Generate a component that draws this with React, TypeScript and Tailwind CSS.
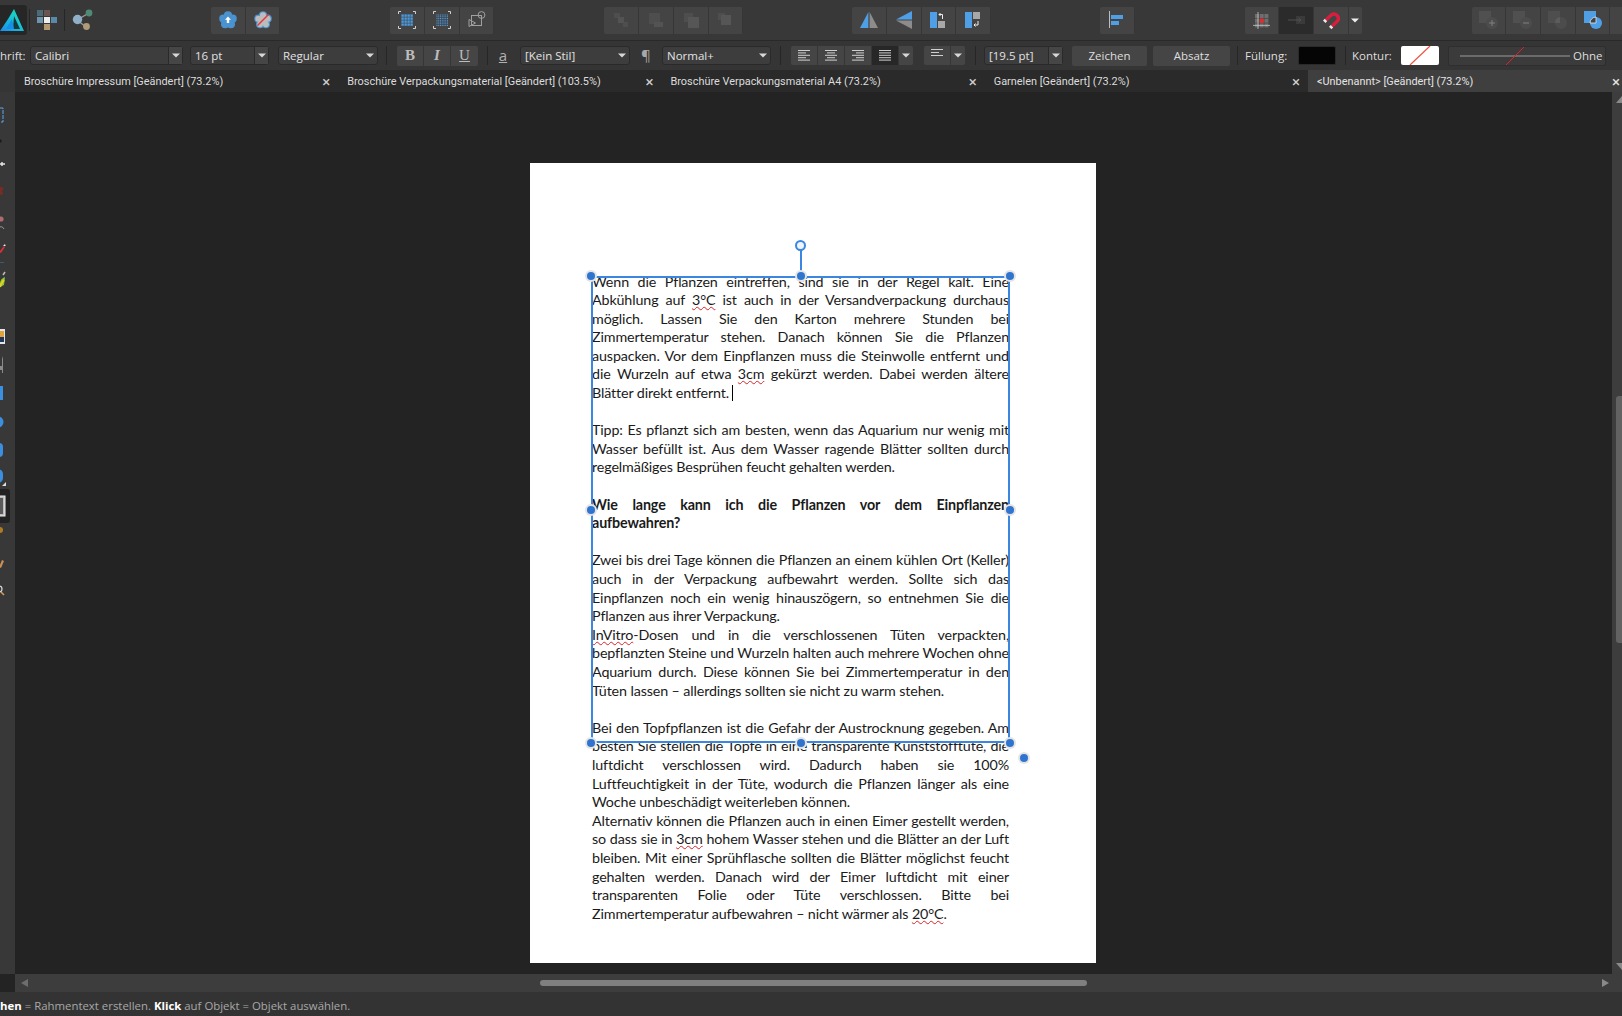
import type { ReactNode } from "react"

/* ----------------------------
   DOCUMENT TEXT
---------------------------- */
type Line = { t: string; last?: boolean; bold?: boolean; caret?: boolean }

const LINES: Line[] = [
    { t: "Wenn die Pflanzen eintreffen, sind sie in der Regel kalt. Eine" },
    { t: "Abkühlung auf 3°C ist auch in der Versandverpackung durchaus" },
    { t: "möglich. Lassen Sie den Karton mehrere Stunden bei" },
    { t: "Zimmertemperatur stehen. Danach können Sie die Pflanzen" },
    { t: "auspacken. Vor dem Einpflanzen muss die Steinwolle entfernt und" },
    { t: "die Wurzeln auf etwa 3cm gekürzt werden. Dabei werden ältere" },
    { t: "Blätter direkt entfernt.", last: true, caret: true },
    { t: "" },
    { t: "Tipp: Es pflanzt sich am besten, wenn das Aquarium nur wenig mit" },
    { t: "Wasser befüllt ist. Aus dem Wasser ragende Blätter sollten durch" },
    { t: "regelmäßiges Besprühen feucht gehalten werden.", last: true },
    { t: "" },
    { t: "Wie lange kann ich die Pflanzen vor dem Einpflanzen", bold: true },
    { t: "aufbewahren?", last: true, bold: true },
    { t: "" },
    { t: "Zwei bis drei Tage können die Pflanzen an einem kühlen Ort (Keller)" },
    { t: "auch in der Verpackung aufbewahrt werden. Sollte sich das" },
    { t: "Einpflanzen noch ein wenig hinauszögern, so entnehmen Sie die" },
    { t: "Pflanzen aus ihrer Verpackung.", last: true },
    { t: "InVitro-Dosen und in die verschlossenen Tüten verpackten," },
    { t: "bepflanzten Steine und Wurzeln halten auch mehrere Wochen ohne" },
    { t: "Aquarium durch. Diese können Sie bei Zimmertemperatur in den" },
    { t: "Tüten lassen – allerdings sollten sie nicht zu warm stehen.", last: true },
    { t: "" },
    { t: "Bei den Topfpflanzen ist die Gefahr der Austrocknung gegeben. Am" },
    { t: "besten Sie stellen die Töpfe in eine transparente Kunststofftüte, die" },
    { t: "luftdicht verschlossen wird. Dadurch haben sie 100%" },
    { t: "Luftfeuchtigkeit in der Tüte, wodurch die Pflanzen länger als eine" },
    { t: "Woche unbeschädigt weiterleben können.", last: true },
    { t: "Alternativ können die Pflanzen auch in einen Eimer gestellt werden," },
    { t: "so dass sie in 3cm hohem Wasser stehen und die Blätter an der Luft" },
    { t: "bleiben. Mit einer Sprühflasche sollten die Blätter möglichst feucht" },
    { t: "gehalten werden. Danach wird der Eimer luftdicht mit einer" },
    { t: "transparenten Folie oder Tüte verschlossen. Bitte bei" },
    { t: "Zimmertemperatur aufbewahren – nicht wärmer als 20°C.", last: true },
]

function Spelled({ text }: { text: string }) {
    return (
        <>
            {text.split(/(3°C|3cm|InVitro|20°C)/).map((part, i) =>
                i % 2 ? (
                    <span key={i} className="underline decoration-wavy decoration-[#d8232a] decoration-1 underline-offset-1">
                        {part}
                    </span>
                ) : (
                    part
                )
            )}
        </>
    )
}

/* ----------------------------
   TOOLBAR PARTS
---------------------------- */
function Group({ children, className = "" }: { children: ReactNode; className?: string }) {
    return <div className={`flex shrink-0 rounded-[2px] overflow-hidden ${className}`}>{children}</div>
}

function Btn({ children, dark }: { children?: ReactNode; dark?: boolean }) {
    return (
        <div className={`w-[34.7px] h-[27px] shrink-0 flex items-center justify-center border-r border-[#363636] ${dark ? "bg-[#2b2b2b]" : "bg-[#444444]"}`}>
            {children}
        </div>
    )
}

function Caret({ color = "#d8d8d8" }: { color?: string }) {
    return (
        <svg width="8" height="5" viewBox="0 0 8 5">
            <path d="M0 0.5h8L4 4.5z" fill={color} />
        </svg>
    )
}

function Combo({ label, w, split, ml }: { label: string; w: string; split?: boolean; ml: string }) {
    return (
        <div className={`${w} ${ml} h-[19px] shrink-0 flex items-center bg-[#3d3d3d] border border-[#2a2a2a] rounded-[3px] text-[#e2e2e2]`}>
            <span className="flex-1 pl-[4px] truncate">{label}</span>
            <span className={`w-[14px] h-full flex items-center justify-center ${split ? "border-l border-[#2a2a2a] bg-[#464646]" : ""}`}>
                <Caret />
            </span>
        </div>
    )
}

function Sep({ ml }: { ml: string }) {
    return <div className={`w-px h-[19px] shrink-0 bg-[#262626] ${ml}`} />
}

function Flower({ fill, children }: { fill: string; children: ReactNode }) {
    const lobes = [0, 72, 144, 216, 288].map((a) => {
        const r = ((a - 90) * Math.PI) / 180
        return [9 + 4.9 * Math.cos(r), 9.2 + 4.9 * Math.sin(r)]
    })
    return (
        <svg width="18" height="18" viewBox="0 0 18 18">
            {lobes.map(([x, y], i) => (
                <circle key={i} cx={x} cy={y} r="4.1" fill="#4a92d0" />
            ))}
            {lobes.map(([x, y], i) => (
                <circle key={i} cx={x} cy={y} r="3" fill={fill} />
            ))}
            <circle cx="9" cy="9.2" r="4.5" fill={fill} />
            {children}
        </svg>
    )
}

function Corners() {
    return (
        <path d="M.5 3V.5H3M15 .5h2.5V3M17.5 15v2.5H15M3 17.5H.5V15" fill="none" stroke="#d0d0d0" strokeWidth="1" />
    )
}

function DotGrid({ n, size, step, start, fill = "#4a9be0" }: { n: number; size: number; step: number; start: number; fill?: string }) {
    const cells = []
    for (let y = 0; y < n; y++) {
        for (let x = 0; x < n; x++) {
            cells.push(<rect key={`${x}-${y}`} x={start + x * step} y={start + y * step} width={size} height={size} fill={fill} />)
        }
    }
    return <>{cells}</>
}

function AlignLines({ kind }: { kind: "left" | "center" | "right" | "justify" }) {
    const rows = [
        [12, 8, 12, 8, 12],
        [12, 8, 12, 8, 12],
        [12, 8, 12, 8, 12],
        [12, 12, 12, 12, 12],
    ][["left", "center", "right", "justify"].indexOf(kind)]
    return (
        <svg width="12" height="11" viewBox="0 0 12 11">
            {rows.map((w, i) => (
                <rect
                    key={i}
                    x={kind === "left" || kind === "justify" ? 0 : kind === "center" ? (12 - w) / 2 : 12 - w}
                    y={i * 2.4}
                    width={w}
                    height="1"
                    fill="#cfcfcf"
                />
            ))}
        </svg>
    )
}

/* ----------------------------
   LEFT TOOL STRIP (clipped by the window edge)
---------------------------- */
const TOOLS: { h: number; icon?: ReactNode; active?: boolean }[] = [
    { h: 14 },
    { h: 26, icon: <rect x="-5" y="2" width="8" height="14" fill="none" stroke="#5aa7ec" strokeWidth="1" strokeDasharray="4 1" /> },
    { h: 24, icon: <circle cx="0" cy="9" r="1.8" fill="#1c1c1c" /> },
    { h: 25, icon: <path d="M0 8h5M2 6v4" stroke="#e8e8e8" strokeWidth="1.4" /> },
    { h: 30, icon: <path d="M-2 5l6 2-2 3 1 3-5 2z" fill="#7a2c24" /> },
    { h: 27, icon: <><circle cx="1" cy="8" r="2.6" fill="#b06a70" /><path d="M-2 17q4-3 6 1" stroke="#9a9a9a" fill="none" /></> },
    { h: 25, icon: <><path d="M-1 14l5-6 1 1-4 6z" fill="#d8303a" /><path d="M3 8l2-2 .6 2z" fill="#eee" /><path d="M-1 25h5" stroke="#3d78c0" /></> },
    { h: 40, icon: <><path d="M0 24q-1-8 5-10l-1 8z" fill="#86c83a" /><path d="M0 24q1-4 4-7" stroke="#e4d020" strokeWidth="2" fill="none" /><path d="M3 12l2-3" stroke="#bbb" strokeWidth="1.5" /></> },
    { h: 49, icon: <><rect x="-6" y="26" width="11" height="15" fill="#dfe6ee" /><rect x="-5" y="28" width="9" height="6" fill="#e0a43a" /><rect x="-5" y="34" width="9" height="5" fill="#22375c" /></> },
    { h: 28, icon: <path d="M-2 14h4V7l1-3v17h-1v-3h-4z" fill="#8a8a8a" /> },
    { h: 28, icon: <rect x="-8" y="6" width="11" height="14" fill="#3b8fe0" /> },
    { h: 28, icon: <circle cx="-2" cy="14" r="5.5" fill="#3b8fe0" /> },
    { h: 27, icon: <rect x="-8" y="7" width="11" height="14" rx="4" fill="#3b8fe0" /> },
    { h: 26, icon: <><rect x="-8" y="6" width="11" height="14" rx="5" fill="#3b8fe0" /><path d="M6 19v4h-4z" fill="#ddd" /></> },
    {
        h: 34,
        active: true,
        icon: <><rect x="-3" y="7" width="8" height="20" fill="#bdbdbd" stroke="#eee" /><path d="M-1 9h4v16h-4z" fill="#5a5a5a" /></>,
    },
    { h: 24, icon: <><circle cx="0" cy="7" r="3" fill="#b07a20" /></> },
    { h: 32, icon: <path d="M-1 20l3-7 2 1-3 7z" fill="#c89058" /> },
    { h: 28, icon: <><circle cx="-1" cy="10" r="3" fill="none" stroke="#ddd" strokeWidth="1.2" /><path d="M1 13l3 3" stroke="#d09a58" strokeWidth="1.6" /></> },
]

export default function App() {
    return (
        <div className="w-[1622px] h-[1016px] flex flex-col overflow-hidden bg-[#232323] font-['Open_Sans',sans-serif] text-[#dcdcdc]">
            {/* MAIN TOOLBAR */}
            <div className="h-[41px] shrink-0 flex items-center overflow-hidden bg-[#383838] border-b border-[#292929]">
                <div className="w-[27px] h-[30px] shrink-0 rounded-r-[3px] bg-[#262626] flex items-center">
                    <svg width="25" height="24" viewBox="0 0 25 24">
                        <defs>
                            <linearGradient id="logo" x1="0" y1="1" x2="1" y2="0">
                                <stop offset="0" stopColor="#1c8cf0" />
                                <stop offset="0.6" stopColor="#18c8d0" />
                                <stop offset="1" stopColor="#1fe0a0" />
                            </linearGradient>
                        </defs>
                        <path d="M14 1L24 23H0L8 11z" fill="url(#logo)" />
                        <path d="M14 8L20 21H13z" fill="#123a3a" />
                        <path d="M6 21l6-10 2 10z" fill="#1590e8" />
                    </svg>
                </div>
                <div className="w-px h-[22px] shrink-0 bg-[#262626] ml-[2px]" />
                <svg className="ml-[7px] shrink-0" width="20" height="20" viewBox="0 0 20 20">
                    <rect x="0" y="0" width="6" height="6" fill="#4d6a78" />
                    <rect x="7" y="0" width="6" height="6" fill="#6a5550" />
                    <rect x="0" y="7" width="6" height="6" fill="#6d95ad" />
                    <rect x="7" y="7" width="6" height="6" fill="#efefef" />
                    <rect x="14" y="7" width="6" height="6" fill="#5a88a8" />
                    <rect x="7" y="14" width="6" height="6" fill="#b39a70" />
                </svg>
                <div className="w-px h-[22px] shrink-0 bg-[#262626] ml-[7px]" />
                <svg className="ml-[7px] shrink-0" width="22" height="22" viewBox="0 0 22 22">
                    <path d="M5 11L17 4M5 11L14 18" stroke="#9a9a9a" strokeWidth="1.4" />
                    <circle cx="5.5" cy="10.5" r="4.7" fill="#8fb0c8" />
                    <circle cx="17" cy="4" r="3.4" fill="#4f8a78" />
                    <circle cx="14.5" cy="17.5" r="3.4" fill="#b09a78" />
                </svg>

                <Group className="ml-[117px]">
                    <Btn>
                        <Flower fill="#4a92d0">
                            <path d="M9 5.5l3 3.2h-1.8V12H7.8V8.7H6z" fill="#fff" />
                        </Flower>
                    </Btn>
                    <Btn>
                        <Flower fill="#bcbcbc">
                            <path d="M3.5 14.5L14.5 3.5" stroke="#e8343a" strokeWidth="1.4" />
                        </Flower>
                    </Btn>
                </Group>

                <Group className="ml-[110px]">
                    <Btn>
                        <svg width="18" height="18" viewBox="0 0 18 18">
                            <Corners />
                            <DotGrid n={4} size={2.4} step={3} start={3.4} />
                        </svg>
                    </Btn>
                    <Btn>
                        <svg width="18" height="18" viewBox="0 0 18 18">
                            <Corners />
                            <DotGrid n={7} size={1} step={1.75} start={3.5} />
                        </svg>
                    </Btn>
                    <Btn>
                        <svg width="18" height="18" viewBox="0 0 18 18" fill="none" stroke="#a0a0a0" strokeWidth="1">
                            <rect x="3.5" y="4.5" width="10" height="10" />
                            <circle cx="13.5" cy="4" r="3.4" />
                            <path d="M1 8.5l6.5 3.5-6.5 3.5z" />
                        </svg>
                    </Btn>
                </Group>

                <Group className="ml-[110px]">
                    <Btn>
                        <svg width="16" height="16" viewBox="0 0 16 16" fill="#4e4e4e">
                            <rect x="1" y="1" width="6" height="5" />
                            <rect x="5" y="5" width="6" height="6" fill="#535353" />
                            <rect x="10" y="10" width="5" height="5" />
                        </svg>
                    </Btn>
                    <Btn>
                        <svg width="16" height="16" viewBox="0 0 16 16" fill="#4e4e4e">
                            <rect x="1" y="1" width="11" height="11" />
                            <rect x="6" y="10" width="9" height="5" fill="#535353" />
                        </svg>
                    </Btn>
                    <Btn>
                        <svg width="16" height="16" viewBox="0 0 16 16" fill="#4e4e4e">
                            <rect x="1" y="1" width="9" height="9" />
                            <rect x="5" y="5" width="11" height="11" fill="#565656" />
                        </svg>
                    </Btn>
                    <Btn>
                        <svg width="16" height="16" viewBox="0 0 16 16" fill="#4e4e4e">
                            <rect x="1" y="1" width="7" height="7" />
                            <rect x="4" y="3" width="10" height="10" fill="#565656" />
                        </svg>
                    </Btn>
                </Group>

                <Group className="ml-[109px]">
                    <Btn>
                        <svg width="18" height="16" viewBox="0 0 18 16">
                            <path d="M8.4 0v16H0z" fill="#4f9fe6" />
                            <path d="M9.6 0v16H18z" fill="#8c8c8c" />
                        </svg>
                    </Btn>
                    <Btn>
                        <svg width="16" height="18" viewBox="0 0 16 18">
                            <path d="M16 0v8.4H0z" fill="#4f9fe6" />
                            <path d="M16 18V9.6H0z" fill="#8c8c8c" />
                        </svg>
                    </Btn>
                    <Btn>
                        <svg width="16" height="16" viewBox="0 0 16 16">
                            <rect x="0" y="0" width="7" height="16" fill="#4f9fe6" />
                            <rect x="8" y="9" width="7" height="7" fill="#a8a8a8" />
                            <path d="M12.5 7V2.5H9M10.5 1L9 2.5 10.5 4" fill="none" stroke="#eee" strokeWidth="1" />
                        </svg>
                    </Btn>
                    <Btn>
                        <svg width="16" height="16" viewBox="0 0 16 16">
                            <rect x="0" y="0" width="7" height="16" fill="#4f9fe6" />
                            <rect x="8" y="0" width="7" height="7" fill="#a8a8a8" />
                            <path d="M13 9v4H9M10.5 11.5L9 13l1.5 1.5" fill="none" stroke="#eee" strokeWidth="1" />
                        </svg>
                    </Btn>
                </Group>

                <Group className="ml-[109px]">
                    <Btn>
                        <svg width="15" height="18" viewBox="0 0 15 18">
                            <rect x="0" y="0" width="1" height="17" fill="#bdbdbd" />
                            <rect x="2" y="4" width="12" height="4" fill="#4f9fe6" />
                            <rect x="2" y="10" width="8" height="4" fill="#4f9fe6" />
                        </svg>
                    </Btn>
                </Group>

                <Group className="ml-[110px]">
                    <Btn>
                        <svg width="17" height="17" viewBox="0 0 17 17">
                            <DotGrid n={3} size={4} step={4.7} start={2} fill="#6e6e6e" />
                            <rect x="6.7" y="6.7" width="4" height="4" fill="#e8282e" />
                            <path d="M0 13.4h17M5 0v17" stroke="#c4c4c4" strokeWidth="0.8" fill="none" />
                        </svg>
                    </Btn>
                    <Btn dark>
                        <svg width="17" height="8" viewBox="0 0 17 8">
                            <rect x="8" y="0" width="9" height="8" fill="#3a3a3a" />
                            <path d="M0 4h13M10.5 2l2.5 2-2.5 2" stroke="#505050" fill="none" />
                        </svg>
                    </Btn>
                    <Btn>
                        <svg width="18" height="18" viewBox="0 0 18 18">
                            <path d="M4 9L9.5 3.8A4.4 4.4 0 0 1 15.5 10L10 15.2" fill="none" stroke="#d81e3c" strokeWidth="3.4" />
                            <path d="M2.2 10.8L4 9M8.2 17L10 15.2" fill="none" stroke="#e8e8e8" strokeWidth="3.4" />
                        </svg>
                    </Btn>
                    <div className="w-[13px] h-[27px] bg-[#444444] flex items-center justify-center">
                        <Caret color="#eeeeee" />
                    </div>
                </Group>

                <Group className="ml-[110px]">
                    <Btn>
                        <svg width="20" height="18" viewBox="0 0 20 18">
                            <rect x="0" y="0" width="12" height="12" fill="#505050" />
                            <circle cx="13" cy="12" r="6" fill="#4c4c4c" />
                            <path d="M10 12h6M13 9v6" stroke="#808080" />
                        </svg>
                    </Btn>
                    <Btn>
                        <svg width="20" height="18" viewBox="0 0 20 18">
                            <rect x="0" y="0" width="12" height="12" fill="#505050" />
                            <circle cx="13" cy="12" r="6" fill="#4c4c4c" />
                            <path d="M10 12h6" stroke="#808080" />
                        </svg>
                    </Btn>
                    <Btn>
                        <svg width="20" height="18" viewBox="0 0 20 18">
                            <rect x="0" y="0" width="12" height="12" fill="#4e4e4e" />
                            <circle cx="13" cy="12" r="6" fill="#4c4c4c" />
                            <path d="M7 12a6 6 0 0 1 5-6v6z" fill="#5c5c5c" />
                        </svg>
                    </Btn>
                    <Btn>
                        <svg width="18" height="18" viewBox="0 0 18 18">
                            <rect x="0" y="0" width="12" height="12" fill="#4f9fe6" />
                            <circle cx="12" cy="12" r="6" fill="#4f9fe6" />
                            <path d="M6 12a6 6 0 0 1 6-6v6z" fill="#444" stroke="#dfe8f0" strokeWidth="0.8" />
                        </svg>
                    </Btn>
                    <Btn />
                </Group>
            </div>

            {/* CONTEXT TOOLBAR */}
            <div className="h-[29px] shrink-0 flex items-center bg-[#353535] text-[11.5px] text-[#dedede] overflow-hidden">
                <span className="w-[22px] shrink-0 text-right">hrift:</span>
                <Combo label="Calibri" w="w-[153px]" ml="ml-[8px]" split />
                <Combo label="16 pt" w="w-[79px]" ml="ml-[7px]" split />
                <Combo label="Regular" w="w-[100px]" ml="ml-[9px]" />
                <Sep ml="ml-[8px]" />
                <Group className="ml-[10px] font-['Liberation_Serif',serif] text-[15px] text-[#bdbdbd]">
                    <div className="w-[27px] h-[20px] bg-[#454545] border-r border-[#363636] flex items-center justify-center font-bold">B</div>
                    <div className="w-[27px] h-[20px] bg-[#454545] border-r border-[#363636] flex items-center justify-center italic font-bold">I</div>
                    <div className="w-[27px] h-[20px] bg-[#454545] flex items-center justify-center underline">U</div>
                </Group>
                <Sep ml="ml-[9px]" />
                <span className="w-[14px] ml-[8px] shrink-0 text-center text-[15px] text-[#b0b0b0] underline">a</span>
                <Combo label="[Kein Stil]" w="w-[110px]" ml="ml-[10px]" />
                <span className="w-[12px] ml-[10px] shrink-0 text-center text-[15px] text-[#a8a8a8]">¶</span>
                <Combo label="Normal+" w="w-[109px]" ml="ml-[10px]" />
                <Sep ml="ml-[9px]" />
                <Group className="ml-[10px]">
                    {(["left", "center", "right", "justify"] as const).map((kind) => (
                        <div
                            key={kind}
                            className={`w-[27px] h-[19px] flex items-center justify-center border-r border-[#363636] ${kind === "justify" ? "bg-[#272727]" : "bg-[#454545]"}`}
                        >
                            <AlignLines kind={kind} />
                        </div>
                    ))}
                    <div className="w-[14px] h-[19px] bg-[#454545] flex items-center justify-center">
                        <Caret />
                    </div>
                </Group>
                <Group className="ml-[11px]">
                    <div className="w-[27px] h-[19px] bg-[#454545] border-r border-[#363636] flex items-start pt-[3px] justify-center">
                        <svg width="12" height="7" viewBox="0 0 12 7">
                            <path d="M0 .5h12M0 3.5h8M0 6.5h12" stroke="#cfcfcf" />
                        </svg>
                    </div>
                    <div className="w-[14px] h-[19px] bg-[#454545] flex items-center justify-center">
                        <Caret />
                    </div>
                </Group>
                <Sep ml="ml-[10px]" />
                <Combo label="[19.5 pt]" w="w-[79px]" ml="ml-[8px]" split />
                <div className="w-[75px] h-[20px] ml-[9px] shrink-0 bg-[#454545] rounded-[2px] flex items-center justify-center">Zeichen</div>
                <div className="w-[77px] h-[20px] ml-[6px] shrink-0 bg-[#454545] rounded-[2px] flex items-center justify-center">Absatz</div>
                <Sep ml="ml-[7px]" />
                <span className="w-[42px] ml-[7px] shrink-0">Füllung:</span>
                <div className="w-[38px] h-[19px] ml-[11px] shrink-0 bg-[#050505] border border-[#2a2a2a] rounded-[2px]" />
                <Sep ml="ml-[9px]" />
                <span className="w-[38px] ml-[6px] shrink-0">Kontur:</span>
                <div className="w-[38px] h-[19px] ml-[11px] shrink-0 bg-white rounded-[2px] overflow-hidden">
                    <svg width="38" height="19" viewBox="0 0 38 19">
                        <path d="M9 19L29 0" stroke="#f0503c" strokeWidth="1.2" />
                    </svg>
                </div>
                <div className="w-[158px] h-[20px] ml-[9px] shrink-0 bg-[#3b3b3b] border border-[#2e2e2e] rounded-[2px] flex items-center pl-[11px]">
                    <svg width="110" height="18" viewBox="0 0 110 18" className="shrink-0">
                        <path d="M0 9h110" stroke="#9c9c9c" />
                        <path d="M46 18L64 0" stroke="#e0202a" />
                    </svg>
                    <span className="ml-[3px]">Ohne</span>
                </div>
            </div>

            {/* TABS */}
            <div className="h-[22px] shrink-0 flex bg-[#353535] font-['Roboto',sans-serif] text-[10.9px]">
                <div className="w-[15px] shrink-0" />
                {[
                    "Broschüre Impressum [Geändert] (73.2%)",
                    "Broschüre Verpackungsmaterial [Geändert] (103.5%)",
                    "Broschüre Verpackungsmaterial A4 (73.2%)",
                    "Garnelen [Geändert] (73.2%)",
                ].map((title) => (
                    <div key={title} className="w-[323.25px] shrink-0 flex items-center justify-between bg-[#2a2a2a] pt-[2px] pl-[9px] pr-[8px] text-[#dcdcdc]">
                        <span>{title}</span>
                        <span className="text-[15px] leading-none text-[#cfcfcf]">×</span>
                    </div>
                ))}
                <div className="flex-1 flex items-center justify-between bg-[#3f3f3f] pt-[2px] pl-[9px] pr-[2px] text-[#e4e4e4]">
                    <span>&lt;Unbenannt&gt; [Geändert] (73.2%)</span>
                    <span className="text-[15px] leading-none">×</span>
                </div>
            </div>

            {/* WORK AREA */}
            <div className="flex-1 min-h-0 flex">
                <div className="w-[15px] shrink-0 bg-[#383838] overflow-hidden flex flex-col">
                    {TOOLS.map((tool, i) => (
                        <svg
                            key={i}
                            width={tool.active ? 10 : 15}
                            height={tool.h}
                            viewBox={`0 0 ${tool.active ? 10 : 15} ${tool.h}`}
                            className={`shrink-0 ${tool.active ? "bg-[#222222] rounded-r-[3px]" : ""}`}
                        >
                            {tool.icon}
                        </svg>
                    ))}
                </div>

                <div className="flex-1 min-w-0 flex justify-center pt-[71px] pr-[1px] bg-[#232323]">
                    <div className="relative w-[566px] h-[800px] shrink-0 bg-white pl-[62px] pt-[109.5px] font-['Lato',sans-serif] text-[14.3px] tracking-[-0.13px] leading-[18.6px] text-[#1a1a1a]">
                        <div className="w-[417px]">
                            {LINES.map((line, i) =>
                                line.t === "" ? (
                                    <div key={i} className="h-[18.6px]" />
                                ) : (
                                    <div
                                        key={i}
                                        className={`h-[18.6px] whitespace-nowrap ${line.last ? "" : "text-justify [text-align-last:justify] [white-space:normal]"} ${line.bold ? "font-bold" : ""}`}
                                    >
                                        <Spelled text={line.t} />
                                        {line.caret && <span className="inline-block w-px h-[16px] ml-[3px] align-[-3px] bg-black" />}
                                    </div>
                                )
                            )}
                        </div>

                        {/* SELECTION FRAME */}
                        <div className="absolute left-[61px] top-[113px] w-[419px] h-[467px] border-2 border-[#3b86e0]">
                            <div className="absolute left-1/2 -top-[30px] w-[2px] h-[30px] -ml-px bg-[#3b86e0]" />
                            <div className="absolute left-1/2 -top-[38px] w-[11px] h-[11px] -ml-[5.5px] rounded-full bg-[#eef5fd] border-2 border-[#3b86e0]" />
                            <div className="absolute -left-[6px] -top-[6px] w-[8px] h-[8px] rounded-full bg-[#2f75d0] ring-2 ring-[#e4e4e4]" />
                            <div className="absolute left-1/2 -top-[6px] -ml-[4px] w-[8px] h-[8px] rounded-full bg-[#2f75d0] ring-2 ring-[#e4e4e4]" />
                            <div className="absolute -right-[6px] -top-[6px] w-[8px] h-[8px] rounded-full bg-[#2f75d0] ring-2 ring-[#e4e4e4]" />
                            <div className="absolute -left-[6px] top-1/2 -mt-[4px] w-[8px] h-[8px] rounded-full bg-[#2f75d0] ring-2 ring-[#e4e4e4]" />
                            <div className="absolute -right-[6px] top-1/2 -mt-[4px] w-[8px] h-[8px] rounded-full bg-[#2f75d0] ring-2 ring-[#e4e4e4]" />
                            <div className="absolute -left-[6px] -bottom-[6px] w-[8px] h-[8px] rounded-full bg-[#2f75d0] ring-2 ring-[#e4e4e4]" />
                            <div className="absolute left-1/2 -bottom-[6px] -ml-[4px] w-[8px] h-[8px] rounded-full bg-[#2f75d0] ring-2 ring-[#e4e4e4]" />
                            <div className="absolute -right-[6px] -bottom-[6px] w-[8px] h-[8px] rounded-full bg-[#2f75d0] ring-2 ring-[#e4e4e4]" />
                            <div className="absolute -right-[20px] -bottom-[21px] w-[8px] h-[8px] rounded-full bg-[#2f75d0] ring-2 ring-[#e4e4e4]" />
                        </div>
                    </div>
                </div>

                {/* RIGHT SCROLLBAR */}
                <div className="w-[10px] shrink-0 bg-[#3d3d3d] flex flex-col pl-[4px]">
                    <svg width="6" height="7" viewBox="0 0 6 7" className="mt-[4px] shrink-0">
                        <path d="M6 0v7H0z" fill="#8a8a8a" />
                    </svg>
                    <div className="w-[6px] h-[247px] mt-[293px] rounded-l-[3px] bg-[#626262] shrink-0" />
                    <svg width="6" height="7" viewBox="0 0 6 7" className="mt-auto mb-[4px] shrink-0">
                        <path d="M6 7V0H0z" fill="#8a8a8a" />
                    </svg>
                </div>
            </div>

            {/* BOTTOM SCROLLBAR */}
            <div className="h-[18px] shrink-0 flex items-center bg-[#3d3d3d] ml-[15px] pl-[6px]">
                <svg width="7" height="8" viewBox="0 0 7 8" className="shrink-0">
                    <path d="M7 0v8L0 4z" fill="#6e6e6e" />
                </svg>
                <div className="w-[547px] h-[6px] ml-[512px] rounded-[3px] bg-[#808080] shrink-0" />
                <svg width="7" height="8" viewBox="0 0 7 8" className="ml-[515px] shrink-0">
                    <path d="M0 0v8l7-4z" fill="#8a8a8a" />
                </svg>
            </div>

            {/* STATUS BAR */}
            <div className="h-[24px] shrink-0 flex items-center pt-[3px] bg-[#333333] text-[11.4px] text-[#a8a8a8] whitespace-pre">
                <b className="text-white">hen</b>
                <span> = Rahmentext erstellen. </span>
                <b className="text-white">Klick</b>
                <span> auf Objekt = Objekt auswählen.</span>
            </div>
        </div>
    )
}
